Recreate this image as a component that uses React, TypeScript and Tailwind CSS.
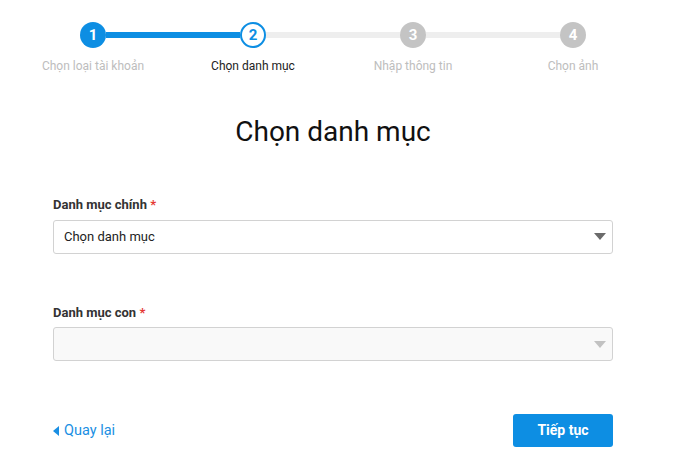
const STEPS = [
  { n: 1, label: "Chọn loại tài khoản" },
  { n: 2, label: "Chọn danh mục" },
  { n: 3, label: "Nhập thông tin" },
  { n: 4, label: "Chọn ảnh" },
];
const CURRENT = 2;

function Step({ n, label }: { n: number; label: string }) {
  const done = n < CURRENT;
  const active = n === CURRENT;
  const leftLine = n === 1 ? "bg-transparent" : n <= CURRENT ? "bg-[#0d8ee3]" : "bg-[#eeeeee]";
  const rightLine = n === 4 ? "bg-transparent" : n < CURRENT ? "bg-[#0d8ee3]" : "bg-[#eeeeee]";
  let circle = "bg-[#c4c4c4] text-white";
  if (done) circle = "bg-[#0d8ee3] text-white";
  if (active) circle = "bg-white border-2 border-[#0d8ee3] text-[#0d8ee3]";
  return (
    <div className="flex flex-col items-center">
      <div className="flex w-full items-center">
        <div className={`h-[6px] flex-1 ${leftLine}`} />
        <div
          className={`flex h-[26px] w-[26px] items-center justify-center rounded-full text-[15px] font-bold ${circle}`}
        >
          {n}
        </div>
        <div className={`h-[6px] flex-1 ${rightLine}`} />
      </div>
      <div
        className={`mt-[12px] text-[12px] leading-none ${active ? "text-[#222]" : "text-[#bdbdbd]"}`}
      >
        {label}
      </div>
    </div>
  );
}

function Select({ label, value, disabled }: { label: string; value?: string; disabled?: boolean }) {
  return (
    <div>
      <div className="mb-[5px] text-[13px] font-bold text-[#333]">
        {label} <span className="text-[#e53935]">*</span>
      </div>
      <div
        className={`flex h-[34px] items-center justify-between rounded-[3px] border border-[#d2d2d2] pl-[10px] pr-[6px] ${
          disabled ? "bg-[#f9f9f9]" : "bg-white"
        }`}
      >
        <span className="text-[13px] text-[#222]">{value}</span>
        <svg width="12" height="7" viewBox="0 0 12 7">
          <path d="M0 0h12L6 7z" fill={disabled ? "#c2c2c2" : "#6b6b6b"} />
        </svg>
      </div>
    </div>
  );
}

export default function App() {
  return (
    <div className="h-[463px] w-[682px] bg-white font-['Roboto',sans-serif]">
      <div className="ml-[13px] w-[640px] pt-[22px]">
        <div className="grid grid-cols-4">
          {STEPS.map((s) => (
            <Step key={s.n} n={s.n} label={s.label} />
          ))}
        </div>

        <h1 className="mt-[46px] text-center text-[28px] leading-none text-[#111]">Chọn danh mục</h1>

        <div className="mx-[40px] mt-[49px] flex flex-col gap-[49px]">
          <Select label="Danh mục chính" value="Chọn danh mục" />
          <Select label="Danh mục con" disabled />
        </div>

        <div className="mx-[40px] mt-[53px] flex items-center justify-between">
          <a className="flex items-center gap-[5px] text-[14.5px] text-[#1a8fe3]">
            <svg width="6" height="10" viewBox="0 0 6 10">
              <path d="M6 0v10L0 5z" fill="#1a8fe3" />
            </svg>
            Quay lại
          </a>
          <button className="h-[33px] w-[100px] rounded-[3px] bg-[#0d8ee3] text-[14px] font-bold text-white">
            Tiếp tục
          </button>
        </div>
      </div>
    </div>
  );
}
